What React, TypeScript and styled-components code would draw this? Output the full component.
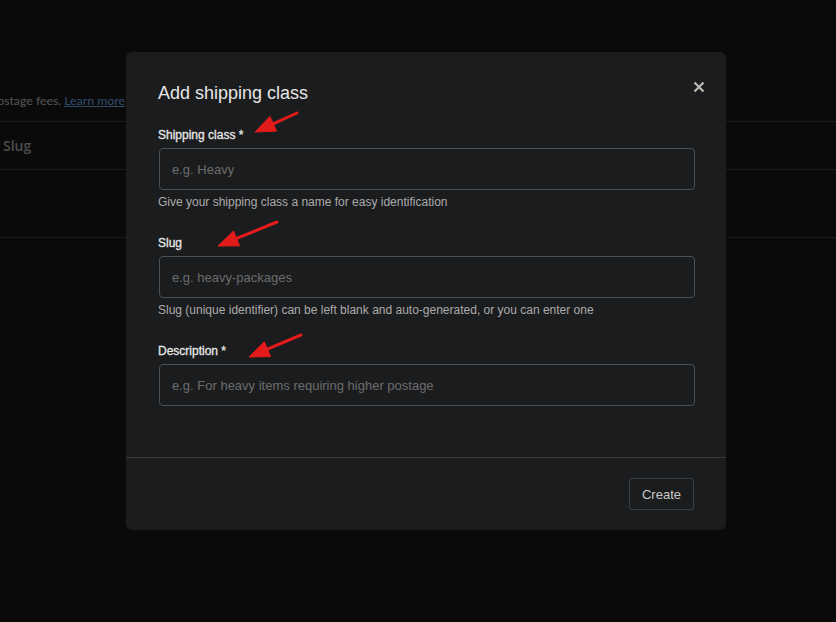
import React from "react";
import styled, { createGlobalStyle } from "styled-components";

const GlobalStyle = createGlobalStyle`
  html, body {
    margin: 0;
    padding: 0;
    background: #181818;
    overflow: hidden;
  }
  body {
    font-family: "Liberation Sans", Arial, sans-serif;
  }
  * {
    box-sizing: border-box;
  }
`;

const Page = styled.div`
  width: 836px;
  height: 622px;
  padding-top: 92px;
  font-family: "Lato", "Open Sans", sans-serif;
  color: #bbbbbb;
`;

const Intro = styled.p`
  margin: 0 0 12px;
  width: 125px;
  display: flex;
  justify-content: flex-end;
  overflow: hidden;
  white-space: nowrap;
  font-size: 12.3px;
  line-height: 17px;
`;

const Link = styled.a`
  color: #6fa8e6;
  text-decoration: underline;
  margin-left: 3px;
`;

const TableRow = styled.div<{ $height: number }>`
  height: ${(p) => p.$height}px;
  border-top: 1px solid #3e3e3e;
  display: flex;
  align-items: center;
  padding-left: 3px;
  font-family: "Open Sans", sans-serif;
  font-size: 14px;
  font-weight: 600;
  color: #a8a8a8;
  &:last-child {
    border-bottom: 1px solid #3e3e3e;
  }
`;

const Overlay = styled.div`
  position: fixed;
  inset: 0;
  background: rgba(0, 0, 0, 0.55);
  display: flex;
  align-items: flex-start;
  padding: 52px 0 0 126px;
`;

const Modal = styled.div`
  position: relative;
  width: 600px;
  background: #1b1c1e;
  border-radius: 6px;
  color: #e2e2e2;
`;

const Body = styled.div`
  padding: 30px 31px 51px 33px;
`;

const Title = styled.h2`
  margin: 0 0 23px -1px;
  font-size: 18px;
  line-height: 22px;
  font-weight: 400;
  color: #e6e6e6;
`;

const CloseButton = styled.button`
  position: absolute;
  top: 28px;
  right: 20px;
  width: 14px;
  height: 14px;
  padding: 0;
  border: none;
  background: none;
  display: flex;
  align-items: center;
  justify-content: center;
  cursor: pointer;
`;

const Field = styled.div`
  display: flex;
  flex-direction: column;
  & + & {
    margin-top: 25px;
  }
`;

const Label = styled.label`
  margin-left: -1px;
  font-size: 12px;
  line-height: 16px;
  font-weight: 400;
  -webkit-text-stroke: 0.3px #e8e8e8;
  color: #e8e8e8;
  margin-bottom: 5px;
`;

const Input = styled.input`
  height: 42px;
  width: 100%;
  border: 1px solid #4b5054;
  border-radius: 4px;
  background: transparent;
  padding: 0 12px;
  font-family: "Liberation Sans", Arial, sans-serif;
  font-size: 13px;
  color: #ddd;
  outline: none;
  &::placeholder {
    color: #6c6c6c;
  }
`;

const Help = styled.span`
  margin-left: -1px;
  margin-top: 4px;
  font-size: 12px;
  line-height: 16px;
  color: #ababab;
`;

const Footer = styled.div`
  border-top: 1px solid #3a3b3d;
  display: flex;
  justify-content: flex-end;
  padding: 20px 32px 20px;
`;

const Button = styled.button`
  height: 32px;
  padding: 0 12px;
  background: transparent;
  border: 1px solid #3d4043;
  border-radius: 3px;
  font-family: "Liberation Sans", Arial, sans-serif;
  font-size: 13px;
  color: #c9c9c9;
  cursor: pointer;
`;

const Annotations = styled.svg`
  position: fixed;
  inset: 0;
  pointer-events: none;
`;

const fields = [
  {
    id: "name",
    label: "Shipping class *",
    placeholder: "e.g. Heavy",
    help: "Give your shipping class a name for easy identification",
  },
  {
    id: "slug",
    label: "Slug",
    placeholder: "e.g. heavy-packages",
    help: "Slug (unique identifier) can be left blank and auto-generated, or you can enter one",
  },
  {
    id: "description",
    label: "Description *",
    placeholder: "e.g. For heavy items requiring higher postage",
    help: "",
  },
];

// tail x,y -> tip x,y
const arrows = [
  [297, 113, 255, 132],
  [277, 222, 218, 246],
  [301, 335, 249, 357],
];

function Arrow({ x1, y1, x2, y2 }: { x1: number; y1: number; x2: number; y2: number }) {
  const dx = x2 - x1;
  const dy = y2 - y1;
  const len = Math.hypot(dx, dy);
  const ux = dx / len;
  const uy = dy / len;
  const headLen = 20;
  const headW = 8;
  const bx = x2 - ux * headLen;
  const by = y2 - uy * headLen;
  const px = -uy * headW;
  const py = ux * headW;
  return (
    <g fill="#e31b1b" stroke="#e31b1b">
      <line x1={x1} y1={y1} x2={bx + ux * 2} y2={by + uy * 2} strokeWidth={3} strokeLinecap="round" />
      <polygon points={`${x2},${y2} ${bx + px},${by + py} ${bx - px},${by - py}`} strokeWidth={1} />
    </g>
  );
}

export default function App() {
  return (
    <>
      <GlobalStyle />
      <Page>
        <Intro>
          Shipping classes can be used to group products for postage fees.
          <Link>Learn more</Link>
        </Intro>
        <TableRow $height={48}>Slug</TableRow>
        <TableRow $height={69} />
      </Page>
      <Overlay>
        <Modal>
          <Body>
            <Title>Add shipping class</Title>
            {fields.map((f) => (
              <Field key={f.id}>
                <Label htmlFor={f.id}>{f.label}</Label>
                <Input id={f.id} placeholder={f.placeholder} />
                {f.help && <Help>{f.help}</Help>}
              </Field>
            ))}
          </Body>
          <Footer>
            <Button>Create</Button>
          </Footer>
          <CloseButton aria-label="Close">
            <svg width="12" height="12" viewBox="0 0 12 12">
              <path d="M1.5 1.5 L10.5 10.5 M10.5 1.5 L1.5 10.5" stroke="#bdb9b2" strokeWidth="2.2" />
            </svg>
          </CloseButton>
        </Modal>
      </Overlay>
      <Annotations width="836" height="622">
        {arrows.map(([x1, y1, x2, y2], i) => (
          <Arrow key={i} x1={x1} y1={y1} x2={x2} y2={y2} />
        ))}
      </Annotations>
    </>
  );
}
